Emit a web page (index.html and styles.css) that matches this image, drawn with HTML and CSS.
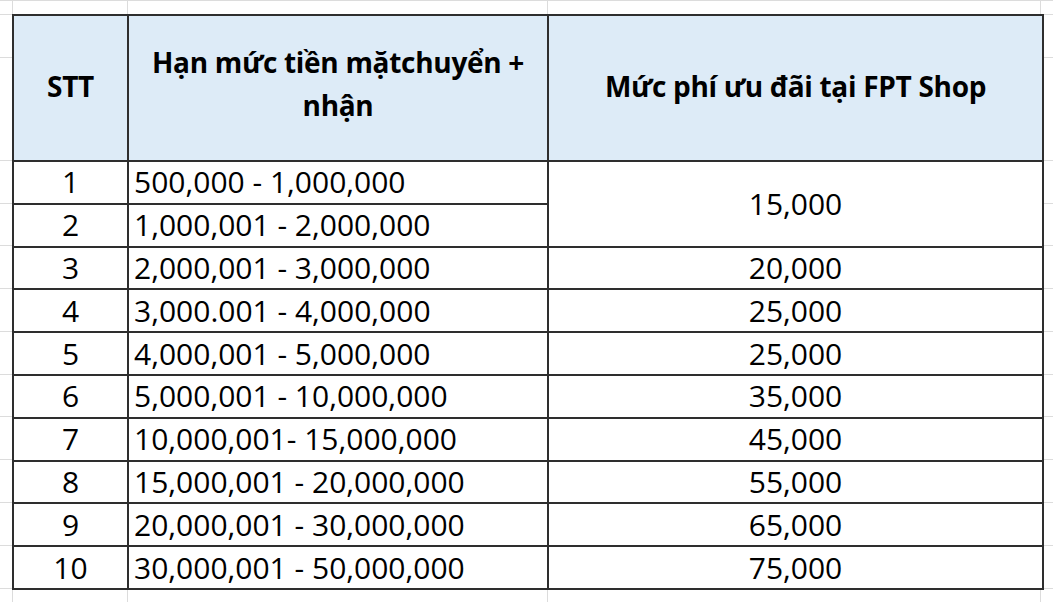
FILE: index.html
```html
<!DOCTYPE html>
<html lang="vi">
<head>
<meta charset="utf-8">
<title>Bảng phí chuyển tiền</title>
<link rel="stylesheet" href="styles.css">
</head>
<body>
<div class="sheet">
  <table class="fees">
    <colgroup>
      <col class="c-stt">
      <col class="c-range">
      <col class="c-fee">
    </colgroup>
    <thead>
      <tr class="head">
        <th>STT</th>
        <th class="two-line">Hạn mức tiền mặtchuyển +<br>nhận</th>
        <th>Mức phí ưu đãi tại FPT Shop</th>
      </tr>
    </thead>
    <tbody>
      <tr><td class="num">1</td><td class="range">500,000 - 1,000,000</td><td class="fee" rowspan="2">15,000</td></tr>
      <tr><td class="num">2</td><td class="range">1,000,001 - 2,000,000</td></tr>
      <tr><td class="num">3</td><td class="range">2,000,001 - 3,000,000</td><td class="fee">20,000</td></tr>
      <tr><td class="num">4</td><td class="range">3,000.001 - 4,000,000</td><td class="fee">25,000</td></tr>
      <tr><td class="num">5</td><td class="range">4,000,001 - 5,000,000</td><td class="fee">25,000</td></tr>
      <tr><td class="num">6</td><td class="range">5,000,001 - 10,000,000</td><td class="fee">35,000</td></tr>
      <tr><td class="num">7</td><td class="range">10,000,001- 15,000,000</td><td class="fee">45,000</td></tr>
      <tr><td class="num">8</td><td class="range">15,000,001 - 20,000,000</td><td class="fee">55,000</td></tr>
      <tr><td class="num">9</td><td class="range">20,000,001 - 30,000,000</td><td class="fee">65,000</td></tr>
      <tr><td class="num">10</td><td class="range">30,000,001 - 50,000,000</td><td class="fee">75,000</td></tr>
    </tbody>
  </table>
</div>
</body>
</html>
```

FILE: styles.css
```css
html, body {
  margin: 0;
  padding: 0;
  background: #ffffff;
}

body {
  width: 1053px;
  height: 602px;
  overflow: hidden;
  font-family: "Open Sans", "Liberation Sans", sans-serif;
  color: #000;
}

/* faint spreadsheet gridlines around the table */
.sheet {
  height: 602px;
  box-sizing: border-box;
  padding: 14px 12px 0 12px;
  background-color: #fff;
  background-image:
    linear-gradient(#dcdcdc, #dcdcdc),
    linear-gradient(#dcdcdc, #dcdcdc),
    linear-gradient(#dcdcdc, #dcdcdc),
    linear-gradient(#dcdcdc, #dcdcdc),
    linear-gradient(#dcdcdc, #dcdcdc),
    linear-gradient(#dcdcdc, #dcdcdc),
    linear-gradient(#dcdcdc, #dcdcdc),
    linear-gradient(#dcdcdc, #dcdcdc),
    linear-gradient(#dcdcdc, #dcdcdc),
    linear-gradient(#dcdcdc, #dcdcdc),
    linear-gradient(#dcdcdc, #dcdcdc),
    linear-gradient(#dcdcdc, #dcdcdc),
    linear-gradient(#dcdcdc, #dcdcdc),
    linear-gradient(#dcdcdc, #dcdcdc),
    linear-gradient(#dcdcdc, #dcdcdc),
    linear-gradient(#dcdcdc, #dcdcdc),
    linear-gradient(#dcdcdc, #dcdcdc),
    linear-gradient(#dcdcdc, #dcdcdc);
  background-repeat: no-repeat;
  background-size:
    1px 100%, 1px 100%, 1px 100%, 1px 100%,
    100% 1px, 100% 1px, 100% 1px, 100% 1px, 100% 1px, 100% 1px, 100% 1px,
    100% 1px, 100% 1px, 100% 1px, 100% 1px, 100% 1px, 100% 1px, 100% 1px;
  background-position:
    12px 0, 127px 0, 547px 0, 1040px 0,
    0 14px, 0 57px, 0 160px, 0 203px, 0 245px, 0 288px, 0 331px,
    0 374px, 0 416px, 0 459px, 0 502px, 0 545px, 0 588px, 0 0;
}

.fees {
  border-collapse: collapse;
  table-layout: fixed;
  width: 1030px;
  background: #fff;
}

.c-stt { width: 115px; }
.c-range { width: 420px; }
.c-fee { width: 495px; }

.fees th,
.fees td {
  border: 2px solid #2e2e2e;
  padding: 0;
  vertical-align: middle;
}

.head th {
  height: 146px;
  box-sizing: border-box;
  padding-bottom: 4px;
  background: #ddebf7;
  font-weight: 700;
  font-size: 28px;
  line-height: 43px;
  text-align: center;
  letter-spacing: -0.3px;
}

.head th.two-line {
  padding-bottom: 8px;
}

.fees td {
  height: 40.8px;
  font-size: 30px;
  line-height: 40px;
  font-weight: 400;
}

.fees td.num,
.fees td.fee {
  text-align: center;
}

.fees td.range {
  text-align: left;
  padding-left: 5px;
  white-space: nowrap;
}
```
